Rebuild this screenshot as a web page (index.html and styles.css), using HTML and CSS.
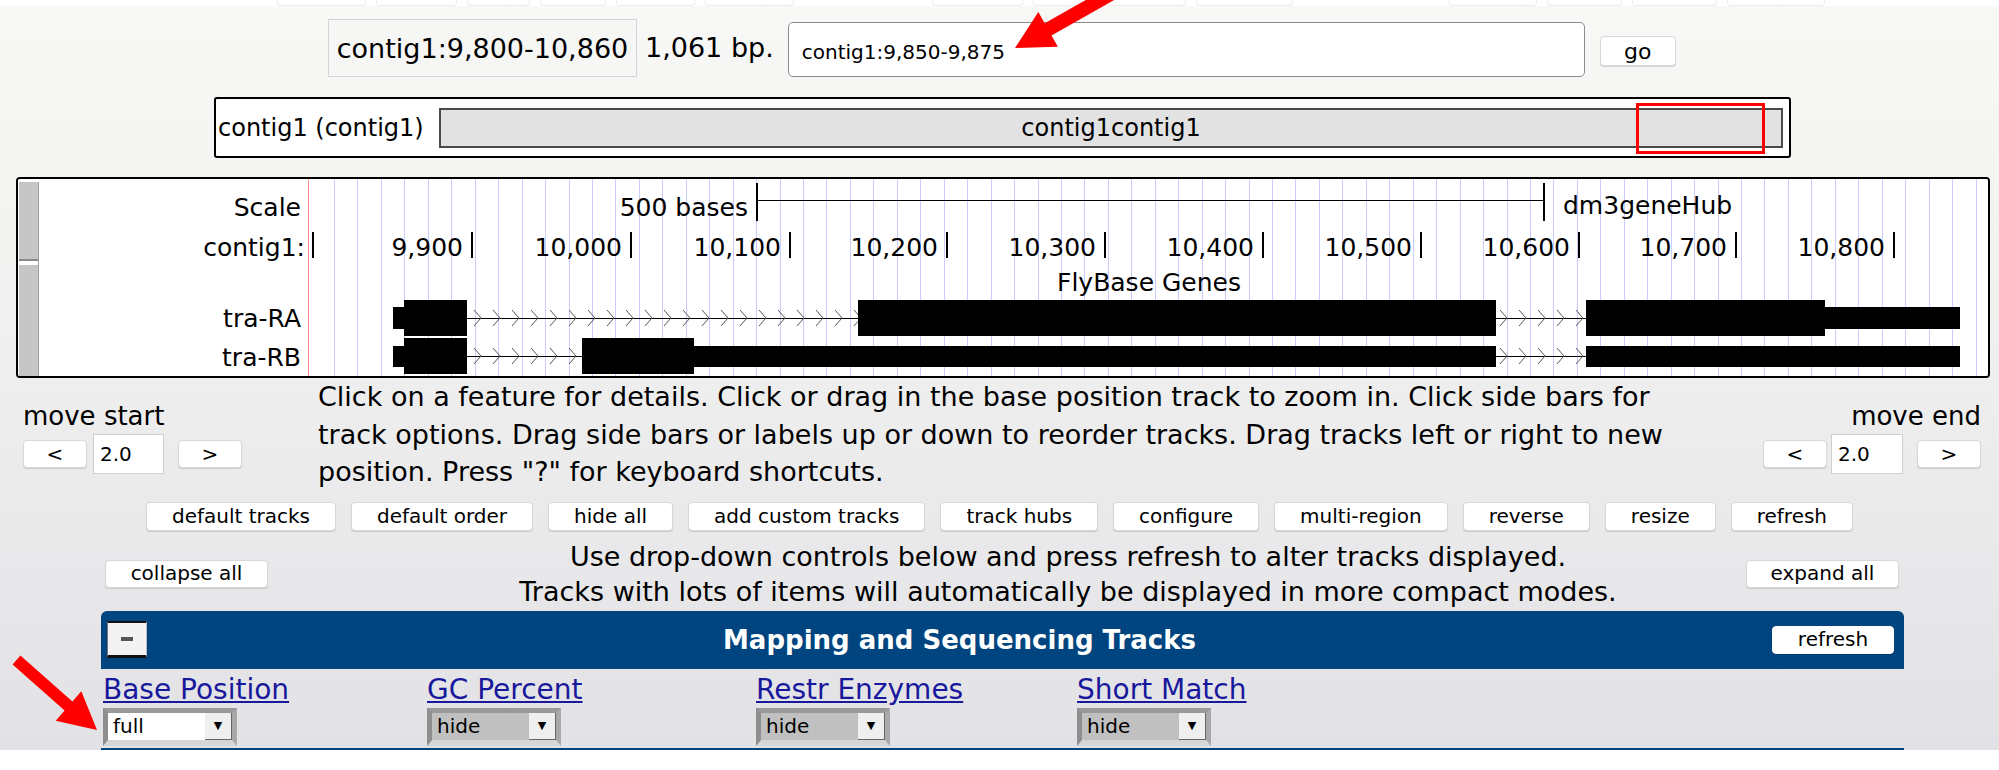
FILE: index.html
```html
<!DOCTYPE html>
<html lang="en">
<head>
<meta charset="utf-8">
<title>Genome Browser</title>
<link rel="stylesheet" href="styles.css">
</head>
<body>
<div class="page">
  <div class="topstrip">
    <span class="ts a"></span><span class="ts b"></span><span class="ts c"></span><span class="ts d"></span><span class="ts e"></span><span class="ts f"></span>
    <span class="ts g gap1"></span><span class="ts h"></span><span class="ts i"></span>
    <span class="ts j gap2"></span><span class="ts k"></span><span class="ts l"></span><span class="ts m"></span>
  </div>

  <div class="posrow">
    <div class="posbox">contig1:9,800-10,860</div>
    <div class="bp">1,061 bp.</div>
    <input class="search" type="text" value="contig1:9,850-9,875">
    <button class="btn go">go</button>
  </div>

  <div class="ideo">
    <span class="ideo-label">contig1 (contig1)</span>
    <div class="ideo-bar">contig1contig1<div class="ideo-sel"></div></div>
  </div>

  <div class="trackimg">
    <svg class="tracksvg" width="1970" height="197" viewBox="18 179 1970 197" xmlns="http://www.w3.org/2000/svg">
      <defs>
        <pattern id="chevA" width="19" height="20" x="467" y="308" patternUnits="userSpaceOnUse">
          <path d="M7 2 L14 10 L7 18" fill="none" stroke="#555" stroke-width="1"/>
        </pattern>
        <pattern id="chevB" width="19" height="20" x="467" y="346" patternUnits="userSpaceOnUse">
          <path d="M7 2 L14 10 L7 18" fill="none" stroke="#555" stroke-width="1"/>
        </pattern>
      </defs>
      <rect x="18" y="179" width="1970" height="197" fill="#fff"/>
      <!-- side bars -->
      <rect x="19" y="182" width="20" height="79" fill="#c6c6c6"/>
      <rect x="19" y="259" width="20" height="2" fill="#8a8a8a"/>
      <rect x="19" y="265" width="20" height="111" fill="#c6c6c6"/>
      <rect x="38" y="182" width="1" height="194" fill="#a0a0a0"/>
      <!-- guide lines -->
      <path stroke="#cbcbff" stroke-width="1" fill="none" d="M334.5 179V376 M357.5 179V376 M381.5 179V376 M404.5 179V376 M428.5 179V376 M451.5 179V376 M475.5 179V376 M498.5 179V376 M522.5 179V376 M545.5 179V376 M569.5 179V376 M592.5 179V376 M615.5 179V376 M639.5 179V376 M662.5 179V376 M686.5 179V376 M709.5 179V376 M733.5 179V376 M756.5 179V376 M780.5 179V376 M803.5 179V376 M826.5 179V376 M850.5 179V376 M873.5 179V376 M897.5 179V376 M920.5 179V376 M944.5 179V376 M967.5 179V376 M991.5 179V376 M1014.5 179V376 M1038.5 179V376 M1061.5 179V376 M1084.5 179V376 M1108.5 179V376 M1131.5 179V376 M1155.5 179V376 M1178.5 179V376 M1202.5 179V376 M1225.5 179V376 M1249.5 179V376 M1272.5 179V376 M1295.5 179V376 M1319.5 179V376 M1342.5 179V376 M1366.5 179V376 M1389.5 179V376 M1413.5 179V376 M1436.5 179V376 M1460.5 179V376 M1483.5 179V376 M1507.5 179V376 M1530.5 179V376 M1553.5 179V376 M1577.5 179V376 M1600.5 179V376 M1624.5 179V376 M1647.5 179V376 M1671.5 179V376 M1694.5 179V376 M1718.5 179V376 M1741.5 179V376 M1764.5 179V376 M1788.5 179V376 M1811.5 179V376 M1835.5 179V376 M1858.5 179V376 M1882.5 179V376 M1905.5 179V376 M1929.5 179V376 M1952.5 179V376 M1976.5 179V376"/>
      <path stroke="#ff8c8c" stroke-width="1" d="M308.5 179V376"/>

      <g font-family="DejaVu Sans, sans-serif" font-size="25" fill="#000">
        <text x="301" y="216" text-anchor="end">Scale</text>
        <text x="748" y="216" text-anchor="end">500 bases</text>
        <text x="1563" y="214">dm3geneHub</text>
        <text x="305" y="256" text-anchor="end">contig1:</text>
        <text x="463" y="256" text-anchor="end">9,900</text>
        <text x="622" y="256" text-anchor="end">10,000</text>
        <text x="781" y="256" text-anchor="end">10,100</text>
        <text x="938" y="256" text-anchor="end">10,200</text>
        <text x="1096" y="256" text-anchor="end">10,300</text>
        <text x="1254" y="256" text-anchor="end">10,400</text>
        <text x="1412" y="256" text-anchor="end">10,500</text>
        <text x="1570" y="256" text-anchor="end">10,600</text>
        <text x="1727" y="256" text-anchor="end">10,700</text>
        <text x="1885" y="256" text-anchor="end">10,800</text>
        <text x="1149" y="291" text-anchor="middle">FlyBase Genes</text>
        <text x="301" y="327" text-anchor="end">tra-RA</text>
        <text x="301" y="366" text-anchor="end">tra-RB</text>
      </g>

      <g stroke="#000" fill="none">
        <path stroke-width="2" d="M757 183V221 M1544 183V221"/>
        <path stroke-width="1" d="M757 200.5H1544"/>
        <path stroke-width="2" d="M313 232V258 M472 232V258 M631 232V258 M790 232V258 M947 232V258 M1105 232V258 M1263 232V258 M1421 232V258 M1579 232V258 M1736 232V258 M1894 232V258"/>
      </g>

      <!-- tra-RA -->
      <path stroke="#000" stroke-width="1" d="M467 318.5H858 M1496 318.5H1586"/>
      <rect x="467" y="308" width="391" height="20" fill="url(#chevA)"/>
      <rect x="1496" y="308" width="90" height="20" fill="url(#chevA)"/>
      <g fill="#000">
        <rect x="393" y="307" width="12" height="22"/>
        <rect x="404" y="300" width="63" height="36"/>
        <rect x="858" y="300" width="638" height="36"/>
        <rect x="1586" y="300" width="239" height="36"/>
        <rect x="1825" y="307" width="135" height="22"/>
      </g>

      <!-- tra-RB -->
      <path stroke="#000" stroke-width="1" d="M467 356.5H582 M1496 356.5H1586"/>
      <rect x="467" y="346" width="115" height="20" fill="url(#chevB)"/>
      <rect x="1496" y="346" width="90" height="20" fill="url(#chevB)"/>
      <g fill="#000">
        <rect x="393" y="346" width="12" height="21"/>
        <rect x="404" y="338" width="63" height="36"/>
        <rect x="582" y="338" width="112" height="36"/>
        <rect x="694" y="346" width="802" height="21"/>
        <rect x="1586" y="346" width="374" height="21"/>
      </g>
    </svg>
  </div>

  <div class="controls">
    <div class="move move-start">
      <div class="move-title">move start</div>
      <div class="move-ctrl">
        <button class="btn arrowbtn">&lt;</button>
        <input class="move-input" type="text" value="2.0">
        <button class="btn arrowbtn">&gt;</button>
      </div>
    </div>
    <p class="help">Click on a feature for details. Click or drag in the base position track to zoom in. Click side bars for<br>track options. Drag side bars or labels up or down to reorder tracks. Drag tracks left or right to new<br>position. Press "?" for keyboard shortcuts.</p>
    <div class="move move-end">
      <div class="move-title">move end</div>
      <div class="move-ctrl end">
        <button class="btn arrowbtn">&lt;</button>
        <input class="move-input" type="text" value="2.0">
        <button class="btn arrowbtn">&gt;</button>
      </div>
    </div>
  </div>

  <div class="btnrow">
    <button class="btn">default tracks</button>
    <button class="btn">default order</button>
    <button class="btn">hide all</button>
    <button class="btn">add custom tracks</button>
    <button class="btn">track hubs</button>
    <button class="btn">configure</button>
    <button class="btn">multi-region</button>
    <button class="btn">reverse</button>
    <button class="btn">resize</button>
    <button class="btn">refresh</button>
  </div>

  <div class="infobar">
    <button class="btn collapse">collapse all</button>
    <div class="info">Use drop-down controls below and press refresh to alter tracks displayed.<br>Tracks with lots of items will automatically be displayed in more compact modes.</div>
    <button class="btn expand">expand all</button>
  </div>

  <div class="group">
    <div class="group-head">
      <div class="minus"><span></span></div>
      <div class="group-title">Mapping and Sequencing Tracks</div>
      <button class="btn group-refresh">refresh</button>
    </div>
    <div class="group-body">
      <div class="track">
        <a class="track-link" href="#">Base Position</a>
        <div class="select full"><span class="val">full</span><span class="arr">&#9660;</span></div>
      </div>
      <div class="track">
        <a class="track-link" href="#">GC Percent</a>
        <div class="select"><span class="val">hide</span><span class="arr">&#9660;</span></div>
      </div>
      <div class="track">
        <a class="track-link" href="#">Restr Enzymes</a>
        <div class="select"><span class="val">hide</span><span class="arr">&#9660;</span></div>
      </div>
      <div class="track">
        <a class="track-link" href="#">Short Match</a>
        <div class="select"><span class="val">hide</span><span class="arr">&#9660;</span></div>
      </div>
    </div>
  </div>

  <svg class="arrows" width="1999" height="770" viewBox="0 0 1999 770" xmlns="http://www.w3.org/2000/svg">
    <polygon fill="#ff0000" points="1015,48 1038.3,11.9 1044.7,23.2 1131.8,-26 1138.6,-13.8 1051.5,35.4 1057.9,46.7"/>
    <polygon fill="#ff0000" points="97,730 81.3,691.3 72.4,701.5 20.4,655.5 12.6,664.5 64.6,710.5 55.7,720.7"/>
  </svg>
</div>
</body>
</html>
```

FILE: styles.css
```css
html, body {
  margin: 0;
  padding: 0;
  background: #ffffff;
}

body {
  font-family: "DejaVu Sans", "Liberation Sans", sans-serif;
  color: #000;
  width: 1999px;
}

.page {
  position: relative;
  height: 750px;
  background: linear-gradient(to bottom, #f8f8f6 0%, #f2f2f1 35%, #e2e2e6 100%);
}

/* faint bottom edge of the toolbar above */
.topstrip {
  height: 6px;
  background: #ffffff;
  display: flex;
  padding-left: 277px;
  gap: 10px;
}
.ts {
  display: block;
  height: 5px;
  border: 1px solid #ececec;
  border-top: none;
  border-radius: 0 0 4px 4px;
}
.ts.a { width: 87px; }
.ts.b { width: 79px; }
.ts.c { width: 61px; }
.ts.d { width: 64px; }
.ts.e { width: 77px; }
.ts.f { width: 87px; }
.ts.g { width: 89px; }
.ts.h { width: 151px; }
.ts.i { width: 95px; }
.ts.j { width: 86px; }
.ts.k { width: 73px; }
.ts.l { width: 83px; }
.ts.m { width: 96px; }
.gap1 { margin-left: 128px; }
.gap2 { margin-left: 146px; }

/* position row */
.posrow {
  display: flex;
  align-items: flex-start;
  padding-left: 328px;
  margin-top: 13px;
}
.posbox {
  box-sizing: border-box;
  width: 309px;
  height: 58px;
  border: 1px solid #d4d4d4;
  background: #f6f6f4;
  font-size: 27px;
  display: flex;
  align-items: center;
  justify-content: center;
}
.bp {
  margin-left: 8px;
  font-size: 27px;
  line-height: 58px;
}
.search {
  box-sizing: border-box;
  margin: 3px 0 0 14px;
  width: 797px;
  height: 55px;
  border: 1px solid #8c8c8c;
  border-radius: 5px;
  background: #fff;
  padding: 4px 0 0 13px;
  font-family: "DejaVu Sans", sans-serif;
  font-size: 20px;
  color: #000;
  outline: none;
}

.btn {
  box-sizing: border-box;
  font-family: "DejaVu Sans", sans-serif;
  font-size: 20px;
  color: #000;
  background: #ffffff;
  border: 1px solid #d8d8d8;
  border-radius: 4px;
  box-shadow: 0 1px 1px rgba(0, 0, 0, 0.14);
  padding: 0 25px;
  height: 29px;
  line-height: 25px;
  white-space: nowrap;
}
.go {
  margin: 17px 0 0 15px;
  width: 76px;
  height: 30px;
  padding: 0;
  font-size: 22px;
}

/* chromosome ideogram */
.ideo {
  box-sizing: border-box;
  margin: 20px 0 0 214px;
  width: 1577px;
  height: 61px;
  border: 2px solid #000;
  border-radius: 3px;
  background: #fff;
  display: flex;
  align-items: center;
  padding-left: 2px;
}
.ideo-label {
  font-size: 24px;
}
.ideo-bar {
  position: relative;
  box-sizing: border-box;
  margin-left: auto;
  margin-right: 6px;
  width: 1344px;
  height: 40px;
  border: 2px solid #4a4a4a;
  background: #e2e2e2;
  font-size: 24px;
  display: flex;
  align-items: center;
  justify-content: center;
}
.ideo-sel {
  position: absolute;
  right: 16px;
  top: -7px;
  width: 129px;
  height: 51px;
  box-sizing: border-box;
  border: 3px solid #ff0000;
}

/* track image */
.trackimg {
  box-sizing: border-box;
  margin: 19px 0 0 16px;
  width: 1974px;
  height: 201px;
  border: 2px solid #000;
  border-radius: 4px;
  background: #fff;
  overflow: hidden;
}
.tracksvg {
  display: block;
}

/* controls */
.controls {
  display: flex;
}
.move {
  box-sizing: border-box;
  padding-top: 23px;
}
.move-start {
  width: 318px;
  padding-left: 23px;
}
.move-end {
  padding-right: 18px;
  text-align: right;
}
.move-title {
  font-size: 26px;
  line-height: 30px;
}
.move-ctrl {
  display: flex;
  align-items: center;
  margin-top: 3px;
}
.move-ctrl.end {
  justify-content: flex-end;
}
.arrowbtn {
  width: 64px;
  height: 28px;
  padding: 0;
}
.move-input {
  box-sizing: border-box;
  width: 71px;
  height: 40px;
  margin: 0 14px 0 6px;
  border: 1px solid #cfcfcf;
  background: #fff;
  padding: 0 0 0 6px;
  font-family: "DejaVu Sans", sans-serif;
  font-size: 20px;
  color: #000;
  outline: none;
}
.move-ctrl.end .move-input {
  width: 72px;
  margin: 0 14px 0 4px;
}
.help {
  margin: 0;
  flex: 1;
  font-size: 27px;
  line-height: 37.5px;
}

.btnrow {
  display: flex;
  justify-content: center;
  gap: 15px;
  margin-top: 11px;
}

.infobar {
  display: flex;
  align-items: center;
  margin-top: 8px;
}
.collapse {
  margin-left: 105px;
  width: 163px;
  height: 28px;
  padding: 0;
}
.expand {
  margin-right: 100px;
  width: 153px;
  height: 28px;
  padding: 0;
}
.info {
  flex: 1;
  text-align: center;
  padding-left: 122px;
  font-size: 27px;
  line-height: 35px;
}

/* track group */
.group {
  margin: 2px 0 0 101px;
  width: 1803px;
}
.group-head {
  height: 58px;
  background: #004580;
  border-radius: 6px 6px 0 0;
  display: flex;
  align-items: center;
}
.minus {
  box-sizing: border-box;
  margin-left: 6px;
  width: 40px;
  height: 37px;
  background: #f3f3f3;
  border-top: 2px solid #111;
  border-bottom: 3px solid #111;
  border-left: 1px solid #777;
  border-right: 1px solid #bbb;
  display: flex;
  align-items: center;
  justify-content: center;
}
.minus span {
  display: block;
  width: 12px;
  height: 4px;
  background: #555;
}
.group-title {
  flex: 1;
  text-align: center;
  color: #ffffff;
  font-weight: bold;
  font-size: 26px;
}
.group-refresh {
  margin-right: 10px;
  width: 122px;
  height: 28px;
  padding: 0;
  border-color: #ffffff;
}
.group-body {
  box-sizing: border-box;
  height: 81px;
  border-bottom: 2px solid #004580;
  display: grid;
  grid-template-columns: 324px 329px 321px 325px;
  padding-left: 2px;
}
.track {
  padding-top: 3px;
}
.track-link {
  display: block;
  width: max-content;
  font-size: 28px;
  line-height: 35px;
  color: #18189c;
  text-decoration: underline;
}
.select {
  box-sizing: border-box;
  margin-top: 1px;
  width: 134px;
  height: 38px;
  display: flex;
  border-style: solid;
  border-width: 5px 5px 6px 5px;
  border-color: #999 #a9a9a9 #d6d6d6 #8e8e8e;
  background: #c0c0c0;
}
.select.full {
  background: #ffffff;
}
.select .val {
  flex: 1;
  font-size: 20px;
  line-height: 27px;
  padding-left: 5px;
}
.select .arr {
  width: 26px;
  background: #efefef;
  border-right: 1px solid #666;
  border-bottom: 1px solid #666;
  font-size: 11px;
  line-height: 26px;
  text-align: center;
}

.arrows {
  position: absolute;
  left: 0;
  top: 0;
  pointer-events: none;
}
```
